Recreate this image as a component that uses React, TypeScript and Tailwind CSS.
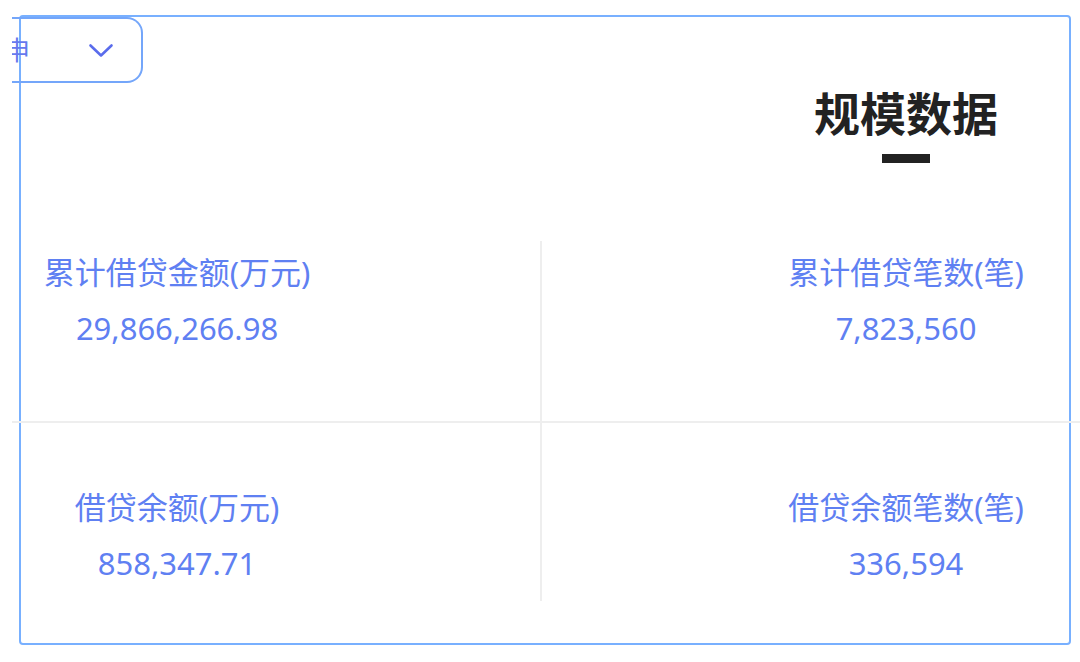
const font = { fontFamily: '"Noto Sans", "Noto Sans CJK SC", sans-serif' };

interface StatProps {
  label: string;
  value: string;
}

function Stat({ label, value }: StatProps) {
  return (
    <div className="flex w-[330px] flex-col items-center text-[#5f80f2]">
      <div className="text-[31px] leading-[36px]">{label}</div>
      <div className="mt-[20px] text-[31px] leading-[36px]">{value}</div>
    </div>
  );
}

export default function App() {
  return (
    <div className="min-h-[662px] w-[1080px] overflow-hidden bg-white pl-[19px] pt-[15px]" style={font}>
      <div className="relative h-[630px] w-[1052px] rounded-[4px] border-2 border-[#78b0ff]">
        {/* select, cut off on the left */}
        <div className="absolute -left-[9px] top-0 flex h-[66px] w-[131px] items-center overflow-hidden rounded-r-[16px] border-2 border-l-0 border-[#74a6fa]">
          <span className="-ml-[8px] text-[26px] leading-none text-[#6679ee]">申</span>
          <svg className="ml-[58px]" width="26" height="15" viewBox="0 0 26 15" fill="none">
            <polyline points="2.5,2.5 13,12.5 23.5,2.5" stroke="#5a6cec" strokeWidth="2.6" strokeLinecap="round" strokeLinejoin="round" />
          </svg>
        </div>

        <div className="ml-[720px] mt-[73px] flex w-[330px] flex-col items-center">
          <h2 className="text-[46px] font-bold leading-[46px] text-[#222]">规模数据</h2>
          <div className="mt-[18px] h-[9px] w-[48px] bg-[#222]" />
        </div>

        <div className="-ml-[9px] mt-[78px] grid w-[1068px] grid-cols-[530px_1fr]">
          <div className="h-[182px] border-b-2 border-r-2 border-[#eeeeee] pt-[13px]">
            <Stat label="累计借贷金额(万元)" value="29,866,266.98" />
          </div>
          <div className="h-[182px] border-b-2 border-[#eeeeee] pl-[199px] pt-[13px]">
            <Stat label="累计借贷笔数(笔)" value="7,823,560" />
          </div>
          <div className="h-[178px] border-r-2 border-[#eeeeee] pt-[66px]">
            <Stat label="借贷余额(万元)" value="858,347.71" />
          </div>
          <div className="h-[178px] pl-[199px] pt-[66px]">
            <Stat label="借贷余额笔数(笔)" value="336,594" />
          </div>
        </div>
      </div>
    </div>
  );
}
